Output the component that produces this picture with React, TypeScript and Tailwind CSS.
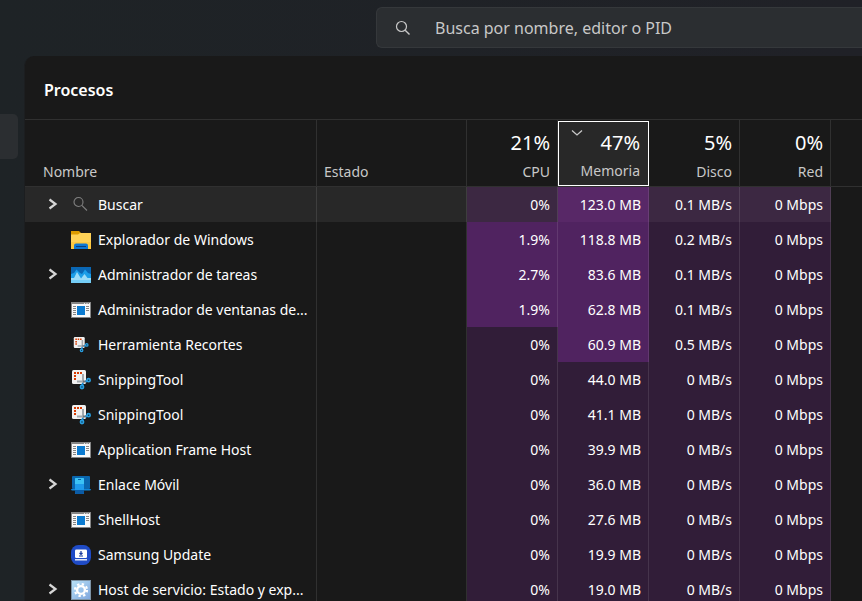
import type { ReactNode } from 'react'
import clsx from 'clsx'

type IconName =
  | 'search'
  | 'folder'
  | 'monitor'
  | 'window'
  | 'snipSmall'
  | 'snip'
  | 'phone'
  | 'samsung'
  | 'gear'

interface Process {
  name: string
  icon: IconName
  expandable?: boolean
  selected?: boolean
  cpu: string
  memory: string
  disk: string
  network: string
  hotCpu?: boolean
  hotMemory?: boolean
}

const processes: Process[] = [
  { name: 'Buscar', icon: 'search', expandable: true, selected: true, cpu: '0%', memory: '123.0 MB', disk: '0.1 MB/s', network: '0 Mbps', hotMemory: true },
  { name: 'Explorador de Windows', icon: 'folder', cpu: '1.9%', memory: '118.8 MB', disk: '0.2 MB/s', network: '0 Mbps', hotCpu: true, hotMemory: true },
  { name: 'Administrador de tareas', icon: 'monitor', expandable: true, cpu: '2.7%', memory: '83.6 MB', disk: '0.1 MB/s', network: '0 Mbps', hotCpu: true, hotMemory: true },
  { name: 'Administrador de ventanas de...', icon: 'window', cpu: '1.9%', memory: '62.8 MB', disk: '0.1 MB/s', network: '0 Mbps', hotCpu: true, hotMemory: true },
  { name: 'Herramienta Recortes', icon: 'snipSmall', cpu: '0%', memory: '60.9 MB', disk: '0.5 MB/s', network: '0 Mbps', hotMemory: true },
  { name: 'SnippingTool', icon: 'snip', cpu: '0%', memory: '44.0 MB', disk: '0 MB/s', network: '0 Mbps' },
  { name: 'SnippingTool', icon: 'snip', cpu: '0%', memory: '41.1 MB', disk: '0 MB/s', network: '0 Mbps' },
  { name: 'Application Frame Host', icon: 'window', cpu: '0%', memory: '39.9 MB', disk: '0 MB/s', network: '0 Mbps' },
  { name: 'Enlace Móvil', icon: 'phone', expandable: true, cpu: '0%', memory: '36.0 MB', disk: '0 MB/s', network: '0 Mbps' },
  { name: 'ShellHost', icon: 'window', cpu: '0%', memory: '27.6 MB', disk: '0 MB/s', network: '0 Mbps' },
  { name: 'Samsung Update', icon: 'samsung', cpu: '0%', memory: '19.9 MB', disk: '0 MB/s', network: '0 Mbps' },
  { name: 'Host de servicio: Estado y exp...', icon: 'gear', expandable: true, cpu: '0%', memory: '19.0 MB', disk: '0 MB/s', network: '0 Mbps' },
]

function SnipArt() {
  return (
    <>
      <rect x="1" y="0" width="14" height="14" rx="1.5" fill="#f1f1f1" />
      <path d="M3 2h2v2H3zM6 2h2v2H6zM9 2h2v2H9zM3 5h2v2H3zM3 8h2v2H3z" fill="#d83b01" />
      <path d="M12 4v9M6 11.500h6" stroke="#a3a9ae" strokeWidth="2" fill="none" />
      <path d="M12 11.500h3.500" stroke="#6d757c" strokeWidth="2" fill="none" />
      <path d="M12 13l-1 2.500M14.500 11.500l2-.8" stroke="#1a8ad4" strokeWidth="2" fill="none" />
      <circle cx="11" cy="17" r="1.600" fill="#0b3550" stroke="#2a9fe0" strokeWidth="1.600" />
      <circle cx="17.600" cy="10.200" r="1.600" fill="#0b3550" stroke="#2a9fe0" strokeWidth="1.600" />
    </>
  )
}

const icons: Record<IconName, ReactNode> = {
  search: (
    <g fill="none" stroke="#808080" strokeWidth="1.1">
      <circle cx="7.500" cy="7" r="4.500" />
      <path d="M10.800 10.300l5.200 5.200" />
    </g>
  ),
  folder: (
    <>
      <path d="M0 1h8l1.500 1.500V5H0z" fill="#dc9b00" />
      <path d="M0 4.500h7L9 3h11v16H0z" fill="#ffd257" />
      <path d="M0 12h20v7H0z" fill="#fbc02d" opacity="0.5" />
      <path d="M3 19v-3.500q0-2 2-2h10q2 0 2 2V19z" fill="#0f78d4" />
      <path d="M5 16.500h10" stroke="#0a3f7c" strokeWidth="1" />
    </>
  ),
  monitor: (
    <>
      <rect x="0" y="2" width="20" height="16" fill="#0a67b4" />
      <path d="M0 9l3-1 2.500-3.500L9 8l2 1 3-4.500L17 8l3 1v9H0z" fill="#1c9ee8" />
      <path d="M0 13h3l3-6 4 6.500L13.500 9l3 4H20v5H0z" fill="#9bdcf8" />
      <path d="M0 15h20v3H0z" fill="#74cdf6" />
    </>
  ),
  window: (
    <>
      <rect x="0.500" y="2.500" width="19" height="15" fill="#f8f8f8" stroke="#858585" />
      <path d="M0 2h20v2H0z" fill="#858585" />
      <path d="M13 3.500h1M15.500 3.500h1M18 3.500h1" stroke="#e8e8e8" />
      <path d="M2 6.500h3M2 8.500h3M2 10.500h3M2 12.500h3M2 14.500h3M15 6.500h3M15 8.500h3M15 10.500h3" stroke="#858585" />
      <rect x="6" y="6" width="8" height="9" fill="#0c7bd0" />
    </>
  ),
  snipSmall: (
    <g transform="translate(2 2) scale(0.78)">
      <SnipArt />
    </g>
  ),
  snip: <SnipArt />,
  phone: (
    <>
      <rect x="1" y="1" width="18" height="13" rx="1" fill="#0a66ae" />
      <path d="M0 14h20q0 1.500-1.500 1.500h-17Q0 15.500 0 14z" fill="#0f86d8" />
      <rect x="4" y="3" width="9" height="16" rx="1" fill="#1f9bec" />
      <path d="M4 4q0-1 1-1h7q1 0 1 1v5H4z" fill="#3bc3f5" />
      <path d="M4 15h9v3q0 1-1 1H5q-1 0-1-1z" fill="#0b5ca6" />
      <path d="M7 4.500h3" stroke="#0b5ca6" />
    </>
  ),
  samsung: (
    <>
      <rect x="0" y="0" width="20" height="20" rx="7.500" fill="#1f4bc6" />
      <rect x="4" y="4.500" width="12" height="8.500" rx="1.300" fill="#fff" />
      <path d="M10 6v3M8.500 8L10 9.500 11.500 8M8 11h4" stroke="#17389b" strokeWidth="1.200" fill="none" />
      <path d="M4 14.800h12" stroke="#fff" strokeWidth="1.300" />
    </>
  ),
  gear: (
    <>
      <defs>
        <linearGradient id="gearBg" x1="0" y1="0" x2="1" y2="1">
          <stop offset="0" stopColor="#b9e2f7" />
          <stop offset="1" stopColor="#7fa6dd" />
        </linearGradient>
      </defs>
      <rect x="0.500" y="0.500" width="19" height="19" fill="url(#gearBg)" stroke="#7d93a5" />
      <circle cx="10" cy="10" r="6" fill="none" stroke="#fff" strokeWidth="2.200" strokeDasharray="2.356 2.356" />
      <circle cx="10" cy="10" r="3.900" fill="none" stroke="#fff" strokeWidth="2.400" />
    </>
  ),
}

function ProcessIcon({ name }: { name: IconName }) {
  return (
    <svg viewBox="0 0 20 20" className="size-5 shrink-0" aria-hidden="true">
      {icons[name]}
    </svg>
  )
}

function HeatCell({ value, hot, selected }: { value: string; hot?: boolean; selected?: boolean }) {
  return (
    <td
      className={clsx(
        'border-r border-white/10 pr-[7px] text-right',
        hot && selected && 'bg-[#582867]',
        hot && !selected && 'bg-[#502360]',
        !hot && selected && 'bg-[#3c2842]',
        !hot && !selected && 'bg-[#311d38]'
      )}
    >
      {value}
    </td>
  )
}

function UsageHeader({ total, label, sorted }: { total: string; label: string; sorted?: boolean }) {
  return (
    <th
      className={clsx('border-b border-b-[#303030] p-0 pt-px font-normal', !sorted && 'border-r border-r-[#303030]')}
      aria-sort={sorted ? 'descending' : undefined}
    >
      <button
        type="button"
        className={clsx(
          'relative flex h-[65px] w-full flex-col items-end justify-end pb-1',
          sorted ? 'border border-white bg-[#282828] pr-2' : 'pr-[7px]'
        )}
      >
        {sorted && (
          <svg viewBox="0 0 12 8" className="absolute top-[7px] left-3 h-2 w-3" aria-hidden="true">
            <path d="M1 1.500l5 4.500 5-4.500" fill="none" stroke="#c8c8c8" strokeWidth="1.3" />
          </svg>
        )}
        <span className={clsx('text-xl text-white', sorted ? 'leading-9' : 'leading-[38px]')}>{total}</span>
        <span className="text-sm leading-5 text-[#c8c8c8]">{label}</span>
      </button>
    </th>
  )
}

function ProcessRow({ process }: { process: Process }) {
  const { selected } = process

  return (
    <tr className={clsx('h-[35px]', selected && 'bg-[#282828]')}>
      <td className="border-r border-white/10 p-0 pl-[18px]">
        <div className="flex items-center">
          <div className="mr-2 flex w-5 justify-center">
            {process.expandable && (
              <button type="button" aria-label={`Expandir ${process.name}`}>
                <svg viewBox="0 0 10 12" className="mb-0.5 h-3 w-2.5" aria-hidden="true">
                  <path d="M1.500 1.500L7.500 6l-6 4.500" fill="none" stroke="#d6d6d6" strokeWidth="2.200" />
                </svg>
              </button>
            )}
          </div>
          <ProcessIcon name={process.icon} />
          <span className="ml-[7px] whitespace-nowrap">{process.name}</span>
        </div>
      </td>
      <td className="border-r border-white/10" />
      <HeatCell value={process.cpu} hot={process.hotCpu} selected={selected} />
      <HeatCell value={process.memory} hot={process.hotMemory} selected={selected} />
      <HeatCell value={process.disk} selected={selected} />
      <HeatCell value={process.network} selected={selected} />
      <td className="bg-[#191919]" />
    </tr>
  )
}

export default function App() {
  return (
    <div className="flex h-screen flex-col overflow-hidden bg-linear-to-r from-[#1e2326] to-[#202127] font-['Noto_Sans','Open_Sans',sans-serif] text-white">
      <header className="flex h-14 shrink-0 pt-[7px] pl-[376px]">
        <label className="flex h-[41px] flex-1 items-center rounded-l-md border border-r-0 border-[#35383b] bg-[#2b2e31] pl-[18px]">
          <svg viewBox="0 0 16 16" className="mr-6 size-4 shrink-0" aria-hidden="true">
            <circle cx="6.500" cy="6.500" r="5" fill="none" stroke="#c8c8c8" strokeWidth="1.200" />
            <path d="M10.200 10.200l4.300 4.300" stroke="#c8c8c8" strokeWidth="1.400" />
          </svg>
          <input
            type="search"
            aria-label="Buscar procesos"
            placeholder="Busca por nombre, editor o PID"
            className="min-w-0 flex-1 bg-transparent text-base text-white outline-none placeholder:text-[#c8c8c8]"
          />
        </label>
      </header>

      <div className="flex min-h-0 flex-1">
        <nav className="w-6 shrink-0 pt-[58px] pr-1.5">
          <button type="button" aria-label="Procesos" className="block h-[45px] w-full rounded-r-[5px] bg-[#2b2e31]" />
        </nav>

        <main className="min-w-0 flex-1 rounded-tl-[10px] border-l border-[#1c1e20] bg-[#191919]">
          <div className="flex h-16 items-center border-b border-[#303030] pt-1 pl-[19px]">
            <h1 className="text-base font-semibold">Procesos</h1>
          </div>

          <table className="w-full table-fixed border-separate border-spacing-0 text-sm">
            <colgroup>
              <col className="w-[292px]" />
              <col className="w-[150px]" />
              <col className="w-[91px]" />
              <col className="w-[91px]" />
              <col className="w-[91px]" />
              <col className="w-[91px]" />
              <col />
            </colgroup>
            <thead>
              <tr>
                <th className="border-r border-b border-[#303030] p-0 pt-px font-normal">
                  <button type="button" className="flex h-[65px] w-full items-end pb-1 pl-[18px] leading-5 text-[#c8c8c8]">
                    Nombre
                  </button>
                </th>
                <th className="border-r border-b border-[#303030] p-0 pt-px font-normal">
                  <button type="button" className="flex h-[65px] w-full items-end pb-1 pl-[7px] leading-5 text-[#c8c8c8]">
                    Estado
                  </button>
                </th>
                <UsageHeader total="21%" label="CPU" />
                <UsageHeader total="47%" label="Memoria" sorted />
                <UsageHeader total="5%" label="Disco" />
                <UsageHeader total="0%" label="Red" />
                <th className="border-b border-[#303030] p-0" />
              </tr>
            </thead>
            <tbody>
              {processes.map((process, index) => (
                <ProcessRow key={index} process={process} />
              ))}
            </tbody>
          </table>
        </main>
      </div>
    </div>
  )
}
